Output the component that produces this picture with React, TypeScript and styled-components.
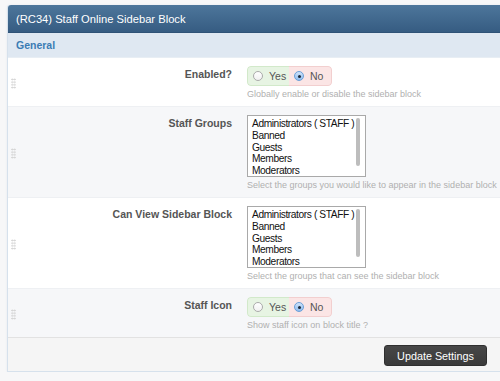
import React from 'react';
import styled, { createGlobalStyle } from 'styled-components';

const GlobalStyle = createGlobalStyle`
  html, body {
    margin: 0;
    padding: 0;
    background: #f7f7f8;
    overflow: hidden;
    font-family: "Liberation Sans", Arial, sans-serif;
  }
`;

const Page = styled.div`
  padding: 5px 0 0 7px;
  width: 520px;
`;

const Panel = styled.div`
  border: 1px solid #d6e1ec;
  border-top: none;
  border-radius: 3px 3px 0 0;
  background: #fff;
  box-shadow: 0 0 2px rgba(120, 150, 180, 0.15);
`;

const Header = styled.div`
  height: 27px;
  display: flex;
  align-items: center;
  padding-left: 8px;
  background: linear-gradient(to bottom, #4d769b, #365c82);
  border-bottom: 1px solid #2f5377;
  border-radius: 3px 3px 0 0;
  color: #fff;
  font-size: 11.2px;
`;

const SubHeader = styled.div`
  height: 24px;
  display: flex;
  align-items: center;
  padding-left: 8px;
  background: #dfe8f2;
  border-bottom: 1px solid #e8eef4;
  color: #3b7cb4;
  font-size: 10.5px;
  font-weight: bold;
`;

const Row = styled.div<{ $alt?: boolean; $last?: boolean }>`
  display: grid;
  grid-template-columns: 12px 197px 1fr;
  column-gap: 15px;
  padding: 8px 0 6px;
  background: ${(p) => (p.$alt ? '#f6f7f9' : '#fff')};
  border-bottom: ${(p) => (p.$last ? 'none' : '1px solid #eef0f3')};
`;

const Handle = styled.div`
  align-self: center;
  justify-self: start;
  margin-left: 3px;
  width: 5px;
  height: 11px;
  background-image: radial-gradient(circle, #cfcfcf 0.8px, transparent 1px);
  background-size: 2.5px 2.75px;
`;

const Label = styled.div`
  text-align: right;
  font-size: 10.5px;
  font-weight: bold;
  color: #555;
  padding-top: 1px;
  line-height: 14px;
`;

const Control = styled.div`
  display: flex;
  flex-direction: column;
  align-items: flex-start;
`;

const Help = styled.div`
  margin-top: 3px;
  font-size: 9px;
  line-height: 11px;
  color: #b0b0b0;
  white-space: nowrap;
`;

const Toggle = styled.div`
  display: flex;
  height: 20px;
  border-radius: 4px;
  overflow: hidden;
`;

const Choice = styled.label<{ $tone: 'yes' | 'no' }>`
  display: flex;
  align-items: center;
  gap: 6px;
  padding: 0 7px 0 5px;
  width: ${(p) => (p.$tone === 'yes' ? 42 : 43)}px;
  box-sizing: border-box;
  font-size: 10.5px;
  color: #555;
  background: ${(p) => (p.$tone === 'yes' ? '#e7f4e3' : '#fbe5e5')};
  border: 1px solid ${(p) => (p.$tone === 'yes' ? '#d2e9ca' : '#f2cfcf')};
  border-radius: ${(p) => (p.$tone === 'yes' ? '4px 0 0 4px' : '0 4px 4px 0')};
  ${(p) => (p.$tone === 'yes' ? 'border-right: none;' : 'border-left: none;')}
`;

const Dot = styled.span<{ $on?: boolean }>`
  width: 10px;
  height: 10px;
  box-sizing: border-box;
  border-radius: 50%;
  flex-shrink: 0;
  display: flex;
  align-items: center;
  justify-content: center;
  border: 1px solid ${(p) => (p.$on ? '#6a9fd8' : '#aaa')};
  background: ${(p) =>
    p.$on ? 'linear-gradient(to bottom, #cfe3fa, #8fbcef)' : 'linear-gradient(to bottom, #fff, #f1f1f1)'};
  &::after {
    content: '';
    display: ${(p) => (p.$on ? 'block' : 'none')};
    width: 3px;
    height: 3px;
    border-radius: 50%;
    background: #1c2a3a;
  }
`;

const ListBox = styled.div`
  display: flex;
  width: 119px;
  height: 62px;
  box-sizing: border-box;
  border: 1px solid #a9a9a9;
  background: #fff;
  overflow: hidden;
`;

const Options = styled.div`
  flex: 1;
  padding: 2px 0 0 4px;
  font-size: 10.2px;
  letter-spacing: -0.4px;
  line-height: 11.8px;
  color: #111;
  white-space: nowrap;
`;

const Track = styled.div`
  width: 7px;
  padding: 2px 2px 0 0;
`;

const Thumb = styled.div`
  width: 4px;
  height: 48px;
  border-radius: 2px;
  background: #bdbdbd;
`;

const Footer = styled.div`
  display: flex;
  justify-content: flex-end;
  padding: 7px 39px 5px 0;
  background: #f5f5f5;
  border-top: 1px solid #e2e2e2;
`;

const Button = styled.button`
  width: 103px;
  height: 21px;
  border: 1px solid #2f2f2f;
  border-radius: 3px;
  background: linear-gradient(to bottom, #474747, #3a3a3a);
  color: #fff;
  font-family: "Liberation Sans", Arial, sans-serif;
  font-size: 10.8px;
  padding: 0;
`;

const groups = ['Administrators ( STAFF )', 'Banned', 'Guests', 'Members', 'Moderators'];

const YesNo = () => (
  <Toggle>
    <Choice $tone="yes">
      <Dot />
      Yes
    </Choice>
    <Choice $tone="no">
      <Dot $on />
      No
    </Choice>
  </Toggle>
);

const GroupList = () => (
  <ListBox>
    <Options>
      {groups.map((g) => (
        <div key={g}>{g}</div>
      ))}
    </Options>
    <Track>
      <Thumb />
    </Track>
  </ListBox>
);

const App = () => (
  <Page>
    <GlobalStyle />
    <Panel>
      <Header>(RC34) Staff Online Sidebar Block</Header>
      <SubHeader>General</SubHeader>
      <Row>
        <Handle />
        <Label>Enabled?</Label>
        <Control>
          <YesNo />
          <Help>Globally enable or disable the sidebar block</Help>
        </Control>
      </Row>
      <Row $alt>
        <Handle />
        <Label>Staff Groups</Label>
        <Control>
          <GroupList />
          <Help>Select the groups you would like to appear in the sidebar block</Help>
        </Control>
      </Row>
      <Row>
        <Handle />
        <Label>Can View Sidebar Block</Label>
        <Control>
          <GroupList />
          <Help>Select the groups that can see the sidebar block</Help>
        </Control>
      </Row>
      <Row $alt $last>
        <Handle />
        <Label>Staff Icon</Label>
        <Control>
          <YesNo />
          <Help>Show staff icon on block title ?</Help>
        </Control>
      </Row>
      <Footer>
        <Button>Update Settings</Button>
      </Footer>
    </Panel>
  </Page>
);

export default App;
